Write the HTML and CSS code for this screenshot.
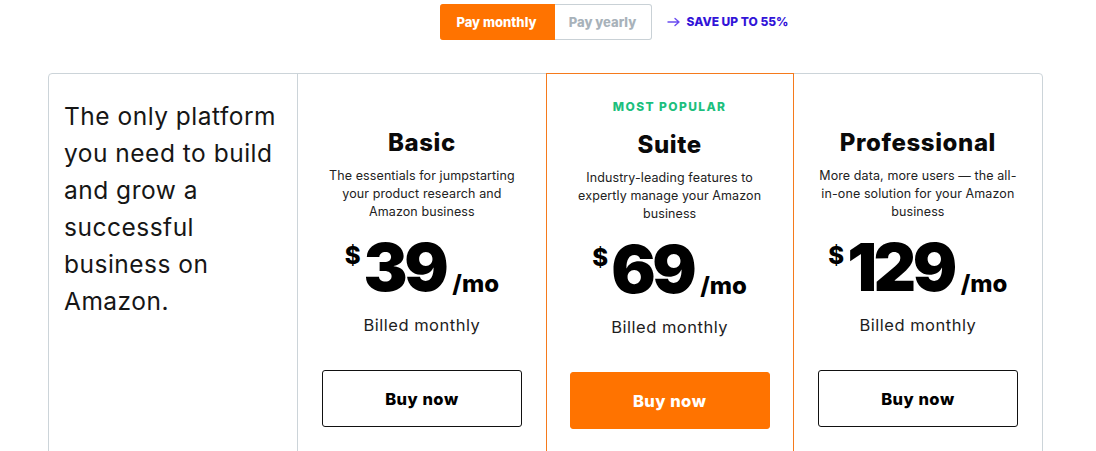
FILE: index.html
```html
<!DOCTYPE html>
<html lang="en">
<head>
<meta charset="utf-8">
<title>Pricing</title>
<link rel="stylesheet" href="styles.css">
</head>
<body>
<div class="page">
  <div class="billing-row">
    <div class="spacer"></div>
    <div class="toggle">
      <button class="toggle-btn active">Pay monthly</button>
      <button class="toggle-btn">Pay yearly</button>
    </div>
    <div class="save">
      <svg class="save-arrow" width="14" height="10" viewBox="0 0 14 10"><path d="M1 5h11M8 1.5 12 5 8 8.5" fill="none" stroke="currentColor" stroke-width="1.4" stroke-linecap="round" stroke-linejoin="round"/></svg>
      <span>SAVE UP TO 55%</span>
    </div>
  </div>

  <div class="table">
    <div class="col intro">
      <p class="intro-text">The only platform you need to build and grow a successful business on Amazon.</p>
    </div>

    <div class="col plan">
      <h2 class="plan-name">Basic</h2>
      <p class="plan-desc">The essentials for jumpstarting your product research and Amazon business</p>
      <div class="price"><span class="cur">$</span><span class="amount">39</span><span class="per">/mo</span></div>
      <p class="billed">Billed monthly</p>
      <button class="buy">Buy now</button>
    </div>

    <div class="col plan popular">
      <div class="badge">MOST POPULAR</div>
      <h2 class="plan-name">Suite</h2>
      <p class="plan-desc">Industry-leading features to expertly manage your Amazon business</p>
      <div class="price"><span class="cur">$</span><span class="amount">69</span><span class="per">/mo</span></div>
      <p class="billed">Billed monthly</p>
      <button class="buy primary">Buy now</button>
    </div>

    <div class="col plan">
      <h2 class="plan-name">Professional</h2>
      <p class="plan-desc">More data, more users — the all-in-one solution for your Amazon business</p>
      <div class="price"><span class="cur">$</span><span class="amount">129</span><span class="per">/mo</span></div>
      <p class="billed">Billed monthly</p>
      <button class="buy">Buy now</button>
    </div>
  </div>
</div>
</body>
</html>
```

FILE: styles.css
```css
* { box-sizing: border-box; }
html, body { margin: 0; padding: 0; background: #fff; }
body {
  font-family: "Inter", "Open Sans", "Liberation Sans", sans-serif;
  color: #111;
  overflow: hidden;
}
.page {
  width: 995px;
  margin-left: 48px;
}
.billing-row {
  display: grid;
  grid-template-columns: 1fr auto 1fr;
  align-items: center;
  padding-top: 4px;
}
.toggle {
  display: flex;
  height: 36px;
}
.toggle-btn {
  font-family: inherit;
  font-size: 13px;
  font-weight: 800;
  border: 1px solid #c9d1d6;
  background: #fff;
  color: #a8b2ba;
  padding: 0;
  width: 97px;
  border-radius: 0 3px 3px 0;
  border-left: none;
  cursor: pointer;
}
.toggle-btn.active {
  width: 115px;
  background: #ff7300;
  border-color: #ff7300;
  color: #fff;
  border-radius: 3px 0 0 3px;
}
.save {
  display: flex;
  align-items: center;
  gap: 6px;
  padding-left: 15px;
  padding-bottom: 1px;
  color: #3214d8;
  font-size: 12px;
  font-weight: 800;
}
.save-arrow { color: #6a4cf0; }

.table {
  margin-top: 33px;
  display: grid;
  grid-template-columns: repeat(4, 1fr);
  border: 1px solid #ccd4d9;
  border-radius: 4px;
  height: 420px;
}
.col {
  border-left: 1px solid #ccd4d9;
}
.col:first-child { border-left: none; }
.intro { padding: 24px 15px 0 15px; }
.intro-text {
  margin: 0;
  font-size: 24.5px;
  letter-spacing: 0.5px;
  line-height: 37px;
  font-weight: 400;
  color: #161616;
}
.plan {
  display: flex;
  flex-direction: column;
  align-items: center;
  text-align: center;
  padding-top: 54px;
}
.popular {
  border: 1px solid #f57a1c;
  margin: -1px 0 0 0;
  padding-top: 25px;
}
.popular + .plan { border-left: none; }
.badge {
  font-size: 12px;
  font-weight: 800;
  letter-spacing: 1.4px;
  color: #1cbf7d;
  line-height: 16px;
  margin-bottom: 15px;
}
.plan-name {
  margin: 0;
  font-size: 24px;
  letter-spacing: 0.6px;
  line-height: 30px;
  font-weight: 800;
  color: #0a0a0a;
}
.plan-desc {
  margin: 9px 0 0 0;
  padding: 0 24px;
  font-size: 12.5px;
  letter-spacing: 0.1px;
  line-height: 18px;
  color: #222;
  min-height: 54px;
}
.price {
  display: flex;
  align-items: flex-start;
  justify-content: center;
  margin-top: 13px;
  height: 66px;
  color: #000;
}
.cur {
  font-size: 24px;
  font-weight: 800;
  line-height: 24px;
  margin-top: 10px;
  margin-right: 3px;
}
.amount {
  font-size: 66px;
  font-weight: 900;
  line-height: 66px;
  letter-spacing: -3.5px;
}
.per {
  align-self: flex-end;
  font-size: 24px;
  font-weight: 800;
  line-height: 24px;
  margin-left: 7px;
  margin-bottom: 4px;
}
.billed {
  margin: 15px 0 0 0;
  font-size: 16.5px;
  letter-spacing: 0.5px;
  line-height: 20px;
  color: #1d1d1d;
}
.buy {
  margin-top: 35px;
  width: 200px;
  height: 57px;
  border: 1px solid #111;
  border-radius: 3px;
  background: #fff;
  font-family: inherit;
  font-size: 16.5px;
  letter-spacing: 0.5px;
  font-weight: 800;
  color: #000;
  cursor: pointer;
}
.buy.primary {
  background: #ff7300;
  border-color: #ff7300;
  color: #fff;
}
```
